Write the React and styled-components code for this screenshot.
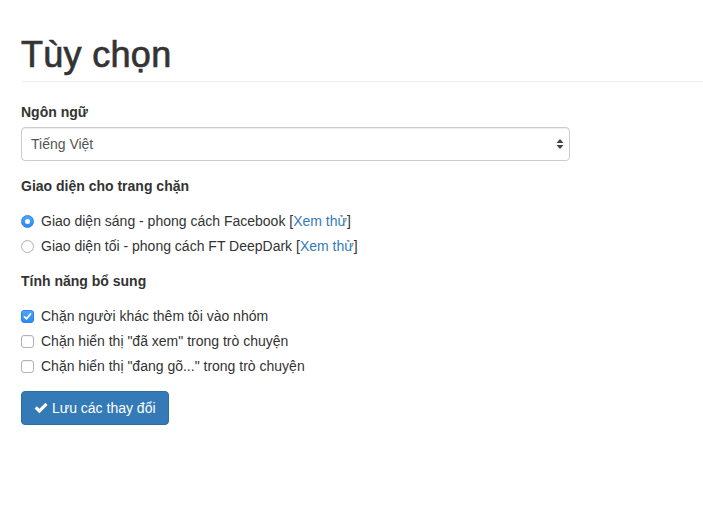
import React, { useState } from 'react';
import styled, { createGlobalStyle } from 'styled-components';

const GlobalStyle = createGlobalStyle`
  html, body {
    margin: 0;
    background: #fff;
  }
  body {
    font-family: "Liberation Sans", Arial, sans-serif;
    font-size: 14px;
    line-height: 20px;
    color: #333;
  }
  * { box-sizing: border-box; }
`;

const Page = styled.div`
  padding: 0 0 40px 21px;
`;

const Header = styled.div`
  margin: 35px 0 20px;
  padding-bottom: 6px;
  border-bottom: 1px solid #eee;
`;

const Title = styled.h1`
  margin: 0;
  font-size: 36px;
  line-height: 1.1;
  font-weight: 500;
  color: #333;
  -webkit-text-stroke: 0.7px #333;
  letter-spacing: 0.3px;
`;

const Group = styled.div`
  margin-bottom: 15px;
`;

const FieldLabel = styled.div`
  font-weight: bold;
  margin-bottom: 5px;
`;

const SelectWrap = styled.div`
  position: relative;
  width: 549px;
`;

const Select = styled.select`
  appearance: none;
  -webkit-appearance: none;
  display: block;
  width: 100%;
  height: 34px;
  padding: 6px 24px 6px 9px;
  font-family: inherit;
  font-size: 14px;
  color: #555;
  background: #fff;
  border: 1px solid #ccc;
  border-radius: 4px;
  box-shadow: inset 0 1px 1px rgba(0, 0, 0, 0.075);
  outline: none;
`;

const Arrows = styled.svg`
  position: absolute;
  right: 6px;
  top: 11px;
  pointer-events: none;
`;

const Options = styled.div`
  display: flex;
  flex-direction: column;
  gap: 5px;
  margin-top: 15px;
`;

const Option = styled.label`
  display: flex;
  align-items: flex-start;
  height: 20px;
  cursor: pointer;
`;

const Mark = styled.span`
  flex: none;
  width: 13px;
  height: 13px;
  margin: 4px 7px 0 0;
  border-radius: ${p => (p.round ? '50%' : '3px')};
  display: flex;
  align-items: center;
  justify-content: center;
  background: ${p => (p.on ? 'linear-gradient(#4fa5fd, #2a8bf2)' : '#fff')};
  border: 1px solid ${p => (p.on ? '#2a84ea' : '#b3b3b3')};
  box-shadow: ${p => (p.on ? 'none' : 'inset 0 1px 1px rgba(0,0,0,0.06)')};
`;

const Dot = styled.span`
  width: 5px;
  height: 5px;
  border-radius: 50%;
  background: #fff;
`;

const Link = styled.a`
  color: #337ab7;
  text-decoration: none;
`;

const Button = styled.button`
  display: inline-flex;
  align-items: center;
  gap: 4px;
  height: 34px;
  padding: 6px 12px;
  font-family: inherit;
  font-size: 14px;
  line-height: 20px;
  color: #fff;
  background: #337ab7;
  border: 1px solid #2e6da4;
  border-radius: 4px;
  cursor: pointer;
`;

const OkIcon = () => (
  <svg width="14" height="14" viewBox="0 0 14 14">
    <path d="M0.6 7.4 L2.8 5.2 L5.4 7.8 L11.4 1.8 L13.6 4 L5.4 12.2 Z" fill="#fff" />
  </svg>
);

const CheckIcon = () => (
  <svg width="9" height="9" viewBox="0 0 9 9">
    <path d="M1.5 4.8 L3.6 6.8 L7.6 1.8" fill="none" stroke="#fff" strokeWidth="1.7" strokeLinecap="round" strokeLinejoin="round" />
  </svg>
);

const themes = [
  { id: 'light', text: 'Giao diện sáng - phong cách Facebook ' },
  { id: 'dark', text: 'Giao diện tối - phong cách FT DeepDark ' },
];

const features = [
  { id: 'group', text: 'Chặn người khác thêm tôi vào nhóm' },
  { id: 'seen', text: 'Chặn hiển thị "đã xem" trong trò chuyện' },
  { id: 'typing', text: 'Chặn hiển thị "đang gõ..." trong trò chuyện' },
];

export default function App() {
  const [theme, setTheme] = useState('light');
  const [checked, setChecked] = useState({ group: true, seen: false, typing: false });

  return (
    <Page>
      <GlobalStyle />
      <Header>
        <Title>Tùy chọn</Title>
      </Header>

      <Group>
        <FieldLabel>Ngôn ngữ</FieldLabel>
        <SelectWrap>
          <Select defaultValue="vi">
            <option value="vi">Tiếng Việt</option>
            <option value="en">English</option>
          </Select>
          <Arrows width="8" height="12" viewBox="0 0 8 12">
            <path d="M4 1 L7.5 5 L0.5 5 Z" fill="#444" />
            <path d="M4 11 L7.5 7 L0.5 7 Z" fill="#444" />
          </Arrows>
        </SelectWrap>
      </Group>

      <Group>
        <FieldLabel>Giao diện cho trang chặn</FieldLabel>
        <Options>
          {themes.map(t => (
            <Option key={t.id} onClick={() => setTheme(t.id)}>
              <Mark round on={theme === t.id ? 1 : 0}>
                {theme === t.id && <Dot />}
              </Mark>
              <span>
                {t.text}[<Link href="#">Xem thử</Link>]
              </span>
            </Option>
          ))}
        </Options>
      </Group>

      <Group>
        <FieldLabel>Tính năng bổ sung</FieldLabel>
        <Options>
          {features.map(f => (
            <Option key={f.id} onClick={() => setChecked(c => ({ ...c, [f.id]: !c[f.id] }))}>
              <Mark on={checked[f.id] ? 1 : 0}>{checked[f.id] && <CheckIcon />}</Mark>
              <span>{f.text}</span>
            </Option>
          ))}
        </Options>
      </Group>

      <Button>
        <OkIcon />
        Lưu các thay đổi
      </Button>
    </Page>
  );
}
